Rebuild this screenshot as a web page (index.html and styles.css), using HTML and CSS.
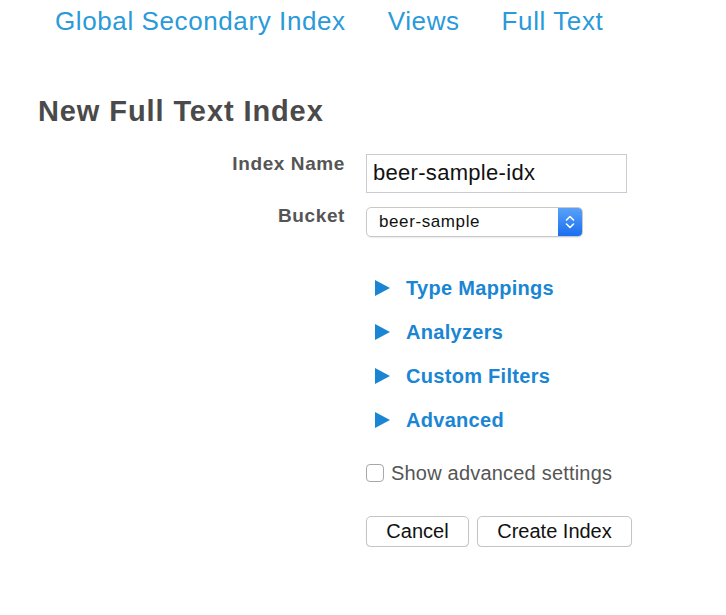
FILE: index.html
```html
<!DOCTYPE html>
<html>
<head>
<meta charset="utf-8">
<link rel="stylesheet" href="styles.css">
</head>
<body>
<nav class="tabs">
  <a class="tab">Global Secondary Index</a>
  <a class="tab">Views</a>
  <a class="tab">Full Text</a>
</nav>
<h1 class="title">New Full Text Index</h1>
<form class="form">
  <div class="row">
    <label class="label">Index Name</label>
    <div class="input">beer-sample-idx</div>
  </div>
  <div class="row row-bucket">
    <label class="label">Bucket</label>
    <div class="select">
      <span class="select-text">beer-sample</span>
      <span class="select-btn">
        <svg width="10" height="16" viewBox="0 0 10 16"><path d="M1.5 6 L5 2.5 L8.5 6 M1.5 10 L5 13.5 L8.5 10" fill="none" stroke="#fff" stroke-width="1.6" stroke-linecap="round" stroke-linejoin="round"/></svg>
      </span>
    </div>
  </div>
  <div class="sections">
    <div class="section"><span class="tri"></span>Type Mappings</div>
    <div class="section"><span class="tri"></span>Analyzers</div>
    <div class="section"><span class="tri"></span>Custom Filters</div>
    <div class="section"><span class="tri"></span>Advanced</div>
  </div>
  <div class="check-row">
    <span class="checkbox"></span>
    <span class="check-label">Show advanced settings</span>
  </div>
  <div class="buttons">
    <button type="button" class="btn btn-cancel">Cancel</button>
    <button type="button" class="btn btn-create">Create Index</button>
  </div>
</form>
</body>
</html>
```
FILE: styles.css
```css
html, body {
  margin: 0;
  padding: 0;
  background: #fff;
  font-family: "Liberation Sans", Arial, sans-serif;
}
.tabs {
  display: flex;
  padding: 6px 0 0 55px;
  gap: 42px;
  height: 40px;
  box-sizing: border-box;
}
.tab {
  color: #2a9ad9;
  font-size: 26px;
  letter-spacing: 0.6px;
  line-height: 30px;
  text-decoration: none;
}
.title {
  margin: 55px 0 0 38px;
  font-size: 29px;
  letter-spacing: 0.9px;
  line-height: 32px;
  font-weight: bold;
  color: #4a4a4a;
}
.form {
  padding-left: 366px;
  margin-top: 27px;
}
.row {
  display: flex;
  align-items: flex-start;
  position: relative;
}
.label {
  position: absolute;
  right: calc(100% + 21px);
  white-space: nowrap;
  font-weight: bold;
  font-size: 19px;
  letter-spacing: 0.6px;
  color: #555;
  top: -1px;
}
.input {
  width: 261px;
  height: 39px;
  box-sizing: border-box;
  border: 1.5px solid #c6ccd2;
  font-size: 22px;
  letter-spacing: 0.3px;
  line-height: 36px;
  padding-left: 6px;
  color: #111;
}
.row-bucket {
  margin-top: 14px;
}
.row-bucket .label {
  top: -2px;
}
.select {
  width: 217px;
  height: 30px;
  box-sizing: border-box;
  border: 1px solid #c9c9c9;
  border-radius: 5px;
  display: flex;
  overflow: hidden;
  box-shadow: 0 1px 1px rgba(0,0,0,0.08);
}
.select-text {
  flex: 1;
  font-size: 17px;
  letter-spacing: 0.6px;
  line-height: 28px;
  padding-left: 12px;
  color: #111;
}
.select-btn {
  width: 24px;
  background: linear-gradient(#5aa2f8, #1a6ef0);
  display: flex;
  align-items: center;
  justify-content: center;
}
.sections {
  margin-top: 40px;
  display: flex;
  flex-direction: column;
  gap: 21.5px;
}
.section {
  display: flex;
  align-items: center;
  font-weight: bold;
  font-size: 20px;
  letter-spacing: 0.3px;
  line-height: 22.5px;
  color: #1a86d3;
}
.tri {
  width: 0;
  height: 0;
  border-top: 8px solid transparent;
  border-bottom: 8px solid transparent;
  border-left: 15px solid #1a86d3;
  margin: 0 16px 0 9px;
}
.check-row {
  display: flex;
  align-items: center;
  margin-top: 30px;
}
.checkbox {
  width: 18px;
  height: 18px;
  box-sizing: border-box;
  border: 1px solid #a8a8a8;
  border-radius: 4px;
  background: #fff;
  margin-right: 7px;
}
.check-label {
  font-size: 20px;
  letter-spacing: 0.2px;
  color: #555;
}
.buttons {
  display: flex;
  gap: 8px;
  margin-top: 31px;
}
.btn {
  font-family: "Liberation Sans", Arial, sans-serif;
  font-size: 20px;
  height: 31px;
  border: 1px solid #c4c4c4;
  border-radius: 5px;
  background: #fff;
  color: #111;
  padding: 0;
  box-shadow: 0 1px 1px rgba(0,0,0,0.1);
}
.btn-cancel { width: 103px; }
.btn-create { width: 155px; }
```
